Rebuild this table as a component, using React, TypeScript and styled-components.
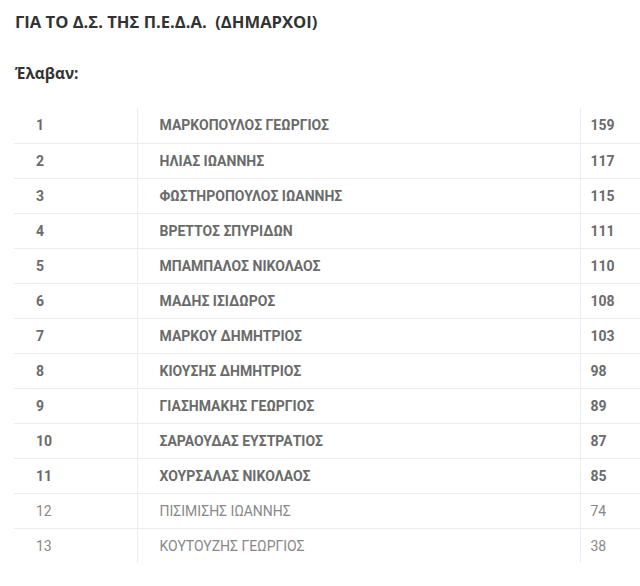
import React from "react";
import styled, { createGlobalStyle } from "styled-components";

const Global = createGlobalStyle`
  html, body { margin: 0; padding: 0; background: #fff; }
  body { overflow: hidden; }
`;

const Page = styled.div`
  width: 640px;
  height: 586px;
  overflow: hidden;
  padding: 11px 0 0 15px;
  box-sizing: border-box;
`;

const Title = styled.h2`
  margin: 0;
  font-family: "Open Sans", sans-serif;
  font-weight: 700;
  font-size: 16.6px;
  line-height: 22px;
  color: #333;
  white-space: pre;
`;

const Subtitle = styled.h3`
  margin: 30px 0 0 0;
  font-family: "Open Sans", sans-serif;
  font-weight: 700;
  font-size: 15.4px;
  line-height: 22px;
  color: #333;
`;

const Table = styled.table`
  margin: 23px 0 0 -1px;
  border-collapse: collapse;
  width: 700px;
  table-layout: fixed;
  font-family: Roboto, sans-serif;
  font-size: 14px;
`;

const Row = styled.tr<{ $bold: boolean }>`
  height: 35px;
  border-top: 1px solid #ececec;
  &:first-child { border-top: none; }
  color: ${(p) => (p.$bold ? "#6b6b6b" : "#888")};
  font-weight: ${(p) => (p.$bold ? 700 : 400)};
`;

const Cell = styled.td<{ $pad: number; $w: number; $line?: boolean }>`
  width: ${(p) => p.$w}px;
  padding: 0 0 0 ${(p) => p.$pad}px;
  box-sizing: border-box;
  vertical-align: middle;
  border-left: ${(p) => (p.$line ? "1px solid #ececec" : "none")};
`;

const rows: [number, string, number][] = [
  [1, "ΜΑΡΚΟΠΟΥΛΟΣ ΓΕΩΡΓΙΟΣ", 159],
  [2, "ΗΛΙΑΣ ΙΩΑΝΝΗΣ", 117],
  [3, "ΦΩΣΤΗΡΟΠΟΥΛΟΣ ΙΩΑΝΝΗΣ", 115],
  [4, "ΒΡΕΤΤΟΣ ΣΠΥΡΙΔΩΝ", 111],
  [5, "ΜΠΑΜΠΑΛΟΣ ΝΙΚΟΛΑΟΣ", 110],
  [6, "ΜΑΔΗΣ ΙΣΙΔΩΡΟΣ", 108],
  [7, "ΜΑΡΚΟΥ ΔΗΜΗΤΡΙΟΣ", 103],
  [8, "ΚΙΟΥΣΗΣ ΔΗΜΗΤΡΙΟΣ", 98],
  [9, "ΓΙΑΣΗΜΑΚΗΣ ΓΕΩΡΓΙΟΣ", 89],
  [10, "ΣΑΡΑΟΥΔΑΣ ΕΥΣΤΡΑΤΙΟΣ", 87],
  [11, "ΧΟΥΡΣΑΛΑΣ ΝΙΚΟΛΑΟΣ", 85],
  [12, "ΠΙΣΙΜΙΣΗΣ ΙΩΑΝΝΗΣ", 74],
  [13, "ΚΟΥΤΟΥΖΗΣ ΓΕΩΡΓΙΟΣ", 38],
];

export default function App() {
  return (
    <Page>
      <Global />
      <Title>ΓΙΑ ΤΟ Δ.Σ. ΤΗΣ Π.Ε.Δ.Α.  (ΔΗΜΑΡΧΟΙ)</Title>
      <Subtitle>Έλαβαν:</Subtitle>
      <Table>
        <tbody>
          {rows.map(([n, name, v]) => (
            <Row key={n} $bold={n <= 11}>
              <Cell $w={123} $pad={22}>{n}</Cell>
              <Cell $w={443} $pad={22} $line>{name}</Cell>
              <Cell $w={134} $pad={10} $line>{v}</Cell>
            </Row>
          ))}
        </tbody>
      </Table>
    </Page>
  );
}
